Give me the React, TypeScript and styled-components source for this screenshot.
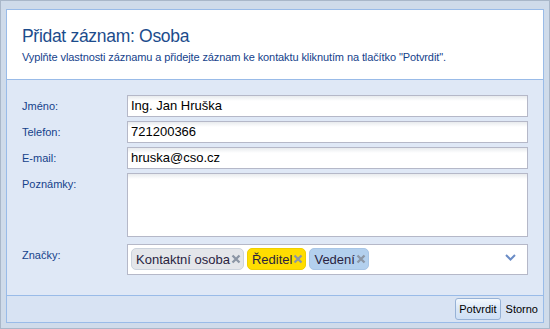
import styled, { createGlobalStyle } from 'styled-components';

const GlobalStyle = createGlobalStyle`
  html, body {
    margin: 0;
    padding: 0;
    background: #ffffff;
  }
  * {
    box-sizing: border-box;
  }
`;

const Window = styled.div`
  width: 550px;
  height: 329px;
  display: flex;
  padding: 8px 5px 5px 5px;
  background: #cfdbea;
  border: 1px solid #a9b7c9;
  font-family: "Liberation Sans", Arial, sans-serif;
`;

const Inner = styled.div`
  flex: 1;
  display: flex;
  flex-direction: column;
  border: 1px solid #99bbe8;
  background: #dfe8f6;
`;

const Header = styled.div`
  height: 70px;
  background: #ffffff;
  border-bottom: 1px solid #99bbe8;
  padding: 15px 15px 0 15px;
`;

const Title = styled.h1`
  margin: 0;
  font-size: 17.5px;
  letter-spacing: -0.3px;
  font-weight: normal;
  line-height: 22px;
  color: #1c4c8c;
`;

const Subtitle = styled.p`
  margin: 3px 0 0 0;
  font-size: 11px;
  letter-spacing: -0.1px;
  line-height: 14px;
  color: #15428b;
`;

const Body = styled.div`
  flex: 1;
  display: grid;
  grid-template-columns: 105px 1fr;
  row-gap: 4px;
  align-content: start;
  padding: 15px 15px 0 15px;
`;

const Label = styled.label<{ $offset?: number }>`
  font-size: 11px;
  line-height: 22px;
  color: #15428b;
  margin-top: ${(p) => p.$offset ?? 0}px;
`;

const Field = styled.div<{ $tall?: boolean }>`
  height: ${(p) => (p.$tall ? 64 : 22)}px;
  border: 1px solid #b5b8c8;
  background: linear-gradient(#e8ebee 0, #ffffff 5px);
  padding: 0 3px;
  font-size: 13px;
  line-height: 20px;
  color: #000;
`;

const TagField = styled.div`
  height: 31px;
  margin-top: 3px;
  border: 1px solid #b5b8c8;
  background: #ffffff;
  padding: 3px;
  display: flex;
  align-items: flex-start;
  gap: 3px;
`;

const Tag = styled.span<{ $bg: string; $border: string }>`
  height: 22px;
  display: inline-flex;
  align-items: center;
  gap: 1px;
  padding: 0 2px 0 4px;
  border-radius: 5px;
  background: ${(p) => p.$bg};
  border: 1px solid ${(p) => p.$border};
  font-size: 13px;
  color: #2a1f3f;
`;

const Chevron = styled.span`
  margin-left: auto;
  margin-right: 8px;
  margin-top: 6px;
  display: flex;
`;

const Footer = styled.div`
  height: 27px;
  border-top: 1px solid #99bbe8;
  background: #d8e3f3;
  display: flex;
  justify-content: flex-end;
  align-items: center;
  gap: 1px;
  padding: 0 1px 0 0;
`;

const Button = styled.button<{ $active?: boolean }>`
  height: 22px;
  padding: 0 3px;
  font-family: "Liberation Sans", Arial, sans-serif;
  font-size: 11px;
  color: #000;
  border-radius: 3px;
  border: 1px solid ${(p) => (p.$active ? '#97b2d6' : 'transparent')};
  background: ${(p) =>
    p.$active ? 'linear-gradient(#f3f8fd, #d9e7f7 50%, #cfe0f5)' : 'transparent'};
`;

function CloseIcon() {
  return (
    <svg width="10" height="10" viewBox="0 0 10 10">
      <path d="M1.5 1.5 L8.5 8.5 M8.5 1.5 L1.5 8.5" stroke="#8c96a5" strokeWidth="2.3" />
    </svg>
  );
}

const tags = [
  { name: 'Kontaktní osoba', bg: '#e4e6ea', border: '#ccd3dd' },
  { name: 'Ředitel', bg: '#ffdd00', border: '#f0cf00' },
  { name: 'Vedení', bg: '#b3d0ee', border: '#a8c5e6' },
];

const fields = [
  { label: 'Jméno:', value: 'Ing. Jan Hruška' },
  { label: 'Telefon:', value: '721200366' },
  { label: 'E-mail:', value: 'hruska@cso.cz' },
];

export default function App() {
  return (
    <>
      <GlobalStyle />
      <Window>
        <Inner>
          <Header>
            <Title>Přidat záznam: Osoba</Title>
            <Subtitle>
              Vyplňte vlastnosti záznamu a přidejte záznam ke kontaktu kliknutím na tlačítko "Potvrdit".
            </Subtitle>
          </Header>
          <Body>
            {fields.map((f) => (
              <>
                <Label key={f.label + 'l'}>{f.label}</Label>
                <Field key={f.label}>{f.value}</Field>
              </>
            ))}
            <Label>Poznámky:</Label>
            <Field $tall />
            <Label $offset={3}>Značky:</Label>
            <TagField>
              {tags.map((t) => (
                <Tag key={t.name} $bg={t.bg} $border={t.border}>
                  {t.name}
                  <CloseIcon />
                </Tag>
              ))}
              <Chevron>
                <svg width="11" height="7" viewBox="0 0 11 7">
                  <path d="M1 1 L5.5 5.5 L10 1" stroke="#6a8cc6" strokeWidth="2" fill="none" />
                </svg>
              </Chevron>
            </TagField>
          </Body>
          <Footer>
            <Button $active>Potvrdit</Button>
            <Button>Storno</Button>
          </Footer>
        </Inner>
      </Window>
    </>
  );
}
